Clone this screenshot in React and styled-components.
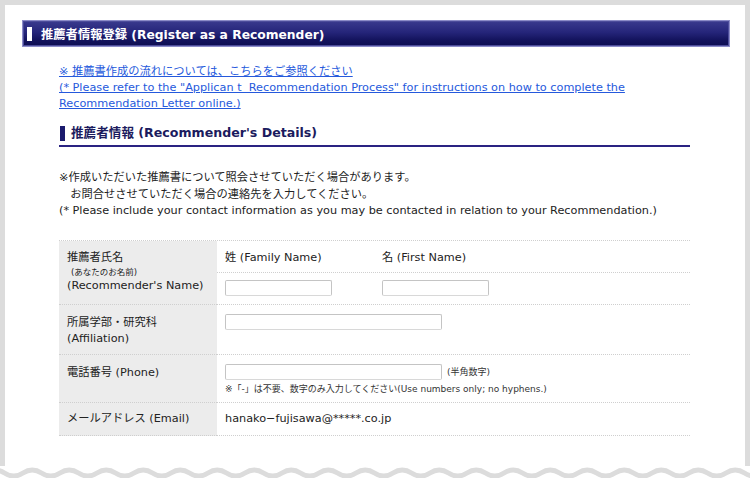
import React from "react";
import styled, { createGlobalStyle } from "styled-components";

const GlobalStyle = createGlobalStyle`
  html, body { margin: 0; padding: 0; background: #fff; }
  body {
    font-family: "DejaVu Sans", "Noto Sans CJK JP", sans-serif;
    color: #222;
  }
`;

const Page = styled.div`
  width: 750px;
`;

const Frame = styled.div`
  box-sizing: border-box;
  width: 750px;
  height: 466px;
  border: 5px solid #dcdcdc;
  border-bottom: none;
  padding: 15px 15px 0 17px;
`;

const TitleBar = styled.h1`
  box-sizing: border-box;
  margin: 0;
  height: 27px;
  display: flex;
  align-items: center;
  gap: 9px;
  padding-left: 4px;
  border: 1px solid #8c8cc8;
  box-shadow: inset 0 0 0 1px #4c4c9a;
  background: linear-gradient(#3a3a8e 0%, #25257a 45%, #14145e 75%, #0d0d52 100%);
  color: #fff;
  font-size: 12.3px;
  font-weight: bold;
`;

const TitleMark = styled.span`
  width: 5px;
  height: 14px;
  background: #fff;
`;

const Body = styled.div`
  width: 631px;
  margin-left: 37px;
`;

const LinkBlock = styled.div`
  margin-top: 17px;
  font-size: 11.25px;
  line-height: 16px;
`;

const Link = styled.a`
  color: #2559dc;
  text-decoration: underline;
  cursor: pointer;
`;

const SectionHead = styled.h2`
  margin: 13px 0 0;
  display: flex;
  align-items: center;
  gap: 6px;
  padding: 0 0 4px 1px;
  border-bottom: 2px solid #2a2382;
  color: #1b1b5e;
  font-size: 12.6px;
  font-weight: bold;
  line-height: 16px;
`;

const SectionMark = styled.span`
  width: 5px;
  height: 15px;
  background: #1b1b6e;
`;

const Notes = styled.p`
  margin: 23px 0 0;
  font-size: 11.25px;
  line-height: 16.5px;
  white-space: pre;
`;

const Table = styled.div`
  margin-top: 20px;
  display: grid;
  grid-template-columns: 158px 1fr;
  border-top: 1px dotted #cfcfcf;
`;

const Label = styled.div`
  box-sizing: border-box;
  background: #ececec;
  padding: ${(p) => p.$pad || "9px 8px"};
  font-size: 11.25px;
  line-height: 16px;
  white-space: nowrap;
  border-bottom: 1px dotted #cfcfcf;
  height: ${(p) => p.$h}px;
`;

const Small = styled.span`
  display: block;
  font-size: 8.5px;
  line-height: 12px;
  padding-left: 4px;
`;

const Cell = styled.div`
  box-sizing: border-box;
  border-bottom: 1px dotted #cfcfcf;
  height: ${(p) => p.$h}px;
  padding: ${(p) => p.$pad || "8px"};
  font-size: 11.25px;
  line-height: 16px;
`;

const SubGrid = styled.div`
  box-sizing: border-box;
  height: 64px;
  display: grid;
  grid-template-rows: 32px 31px;
  border-bottom: 1px dotted #cfcfcf;
`;

const SubRow = styled.div`
  box-sizing: border-box;
  display: grid;
  grid-template-columns: 157px 1fr;
  align-items: center;
  padding-left: 8px;
  font-size: 11.25px;
  border-bottom: ${(p) => (p.$line ? "1px dotted #cfcfcf" : "none")};
`;

const Input = styled.input`
  box-sizing: border-box;
  display: block;
  width: ${(p) => p.$w}px;
  height: 16px;
  margin: 0;
  padding: 0 3px;
  border: 1px solid #c4c4c4;
  border-bottom-color: #d8d8d8;
  border-radius: 2px;
  background: #fff;
  font-size: 11px;
`;

const InlineRow = styled.div`
  display: flex;
  align-items: center;
  gap: 5px;
`;

const Hint = styled.span`
  font-size: 9px;
  line-height: 12px;
  color: #333;
`;

const Note = styled.div`
  margin-top: 3px;
  font-size: 9px;
  line-height: 12px;
  color: #333;
`;

const Wave = styled.svg`
  display: block;
`;

function WaveEdge() {
  const period = 37;
  let d = "M -14 7";
  for (let x = -14; x < 760; x += period) {
    d += ` q ${period / 4} -6 ${period / 2} 0 t ${period / 2} 0`;
  }
  return (
    <Wave width="750" height="12" viewBox="0 0 750 12">
      <path d={d} fill="none" stroke="#dcdcdc" strokeWidth="5" />
    </Wave>
  );
}

export default function App() {
  return (
    <Page>
      <GlobalStyle />
      <Frame>
        <TitleBar>
          <TitleMark />
          推薦者情報登録 (Register as a Recomender)
        </TitleBar>
        <Body>
          <LinkBlock>
            <Link>※ 推薦書作成の流れについては、こちらをご参照ください</Link>
            <br />
            <Link>
              (* Please refer to the "Applican t&nbsp; Recommendation Process" for instructions on how to complete the
              Recommendation Letter online.)
            </Link>
          </LinkBlock>
          <SectionHead>
            <SectionMark />
            推薦者情報 (Recommender's Details)
          </SectionHead>
          <Notes>
            {"※作成いただいた推薦書について照会させていただく場合があります。\n　お問合せさせていただく場合の連絡先を入力してください。\n(* Please include your contact information as you may be contacted in relation to your Recommendation.)"}
          </Notes>
          <Table>
            <Label $h={64} $pad="9px 8px">
              推薦者氏名
              <Small>(あなたのお名前)</Small>
              (Recommender's Name)
            </Label>
            <SubGrid>
              <SubRow $line>
                <span>姓 (Family Name)</span>
                <span>名 (First Name)</span>
              </SubRow>
              <SubRow>
                <Input $w={107} />
                <Input $w={107} />
              </SubRow>
            </SubGrid>

            <Label $h={50} $pad="10px 8px">
              所属学部・研究科
              <br />
              (Affiliation)
            </Label>
            <Cell $h={50} $pad="9px 8px">
              <Input $w={217} />
            </Cell>

            <Label $h={48} $pad="10px 8px">
              電話番号 (Phone)
            </Label>
            <Cell $h={48} $pad="9px 8px">
              <InlineRow>
                <Input $w={217} />
                <Hint>(半角数字)</Hint>
              </InlineRow>
              <Note>※「-」は不要、数字のみ入力してください(Use numbers only; no hyphens.)</Note>
            </Cell>

            <Label $h={33} $pad="8px 8px">
              メールアドレス (Email)
            </Label>
            <Cell $h={33} $pad="8px 8px">
              hanako−fujisawa@*****.co.jp
            </Cell>
          </Table>
        </Body>
      </Frame>
      <WaveEdge />
    </Page>
  );
}
